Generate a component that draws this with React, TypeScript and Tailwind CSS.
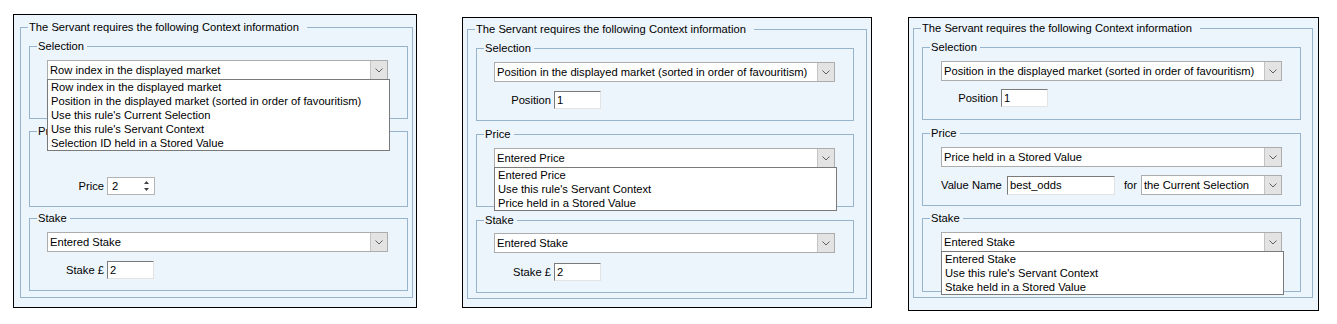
import type { ReactNode } from "react";

const line = "border-[#98b4cc]";

function Chevron() {
  return (
    <svg width="8" height="5" viewBox="0 0 8 5" className="block">
      <path d="M0.5 0.5 L4 4 L7.5 0.5" fill="none" stroke="#606060" strokeWidth="1" />
    </svg>
  );
}

function GroupBox({
  title,
  className,
  outer,
  children,
}: {
  title: string;
  className: string;
  outer?: boolean;
  children?: ReactNode;
}) {
  return (
    <fieldset className={`border ${line} ${className}`}>
      <legend className={`ml-[7px] pl-[1px] leading-[14px] ${outer ? "pr-[8px]" : "pr-[3px]"}`}>{title}</legend>
      {children}
    </fieldset>
  );
}

function Combo({
  value,
  className,
  items,
}: {
  value: string;
  className: string;
  items?: string[];
}) {
  return (
    <div className={`relative flex h-[20px] items-center border border-[#acacac] bg-white ${className}`}>
      <span className="flex-1 truncate pl-[2px] leading-[18px]">{value}</span>
      <span className="flex h-[18px] w-[17px] items-center justify-center border-l border-[#c4c4c4] bg-[#e3e3e3]">
        <Chevron />
      </span>
      {items ? (
        <ul className="absolute left-[-1px] top-full z-10 w-[343px] border border-[#7a7a7a] bg-white">
          {items.map((item) => (
            <li key={item} className="h-[14px] pl-[3px] leading-[14px] whitespace-nowrap">
              {item}
            </li>
          ))}
        </ul>
      ) : null}
    </div>
  );
}

function TextBox({ value, className }: { value: string; className: string }) {
  return (
    <div
      className={`border border-t-[#7a7a7a] border-l-[#7a7a7a] border-r-[#e3e3e3] border-b-[#e3e3e3] bg-white pl-[2px] leading-[16px] ${className}`}
    >
      {value}
    </div>
  );
}

function Field({
  label,
  labelWidth,
  children,
  className,
}: {
  label: string;
  labelWidth: string;
  children: ReactNode;
  className: string;
}) {
  return (
    <div className={`flex items-center ${className}`}>
      <span className={`${labelWidth} pr-[3px] text-right whitespace-nowrap`}>{label}</span>
      {children}
    </div>
  );
}

function Spinner() {
  return (
    <div className="flex h-[18px] w-[48px] items-center border border-[#b4b4b4] bg-white">
      <span className="flex-1 pl-[4px] leading-[16px]">2</span>
      <span className="mr-[5px] flex flex-col items-center gap-[4px]">
        <svg width="5" height="3" viewBox="0 0 5 3" className="block">
          <path d="M0 3 L2.5 0 L5 3 Z" fill="#404040" />
        </svg>
        <svg width="5" height="3" viewBox="0 0 5 3" className="block">
          <path d="M0 0 L2.5 3 L5 0 Z" fill="#404040" />
        </svg>
      </span>
    </div>
  );
}

const selectionItems = [
  "Row index in the displayed market",
  "Position in the displayed market (sorted in order of favouritism)",
  "Use this rule's Current Selection",
  "Use this rule's Servant Context",
  "Selection ID held in a Stored Value",
];

const positionText = "Position in the displayed market (sorted in order of favouritism)";
const title = "The Servant requires the following Context information";

export default function App() {
  return (
    <div className="flex h-[324px] w-[1337px] items-start bg-white pl-[13px] font-['Liberation_Sans',Arial,sans-serif] text-[11.2px] text-black">
      {/* first capture: selection list open */}
      <div className="mt-[14px] h-[294px] w-[404px] border border-black bg-[#edf5fc]">
        <GroupBox title={title} outer className="ml-[6px] mt-[5px] h-[278px] w-[393px]">
          <GroupBox title="Selection" className="ml-[8px] mt-[5px] h-[80px] w-[379px]">
            <Combo value="Row index in the displayed market" className="ml-[17px] mt-[7px] w-[341px]" items={selectionItems} />
          </GroupBox>
          <GroupBox title="Price" className="ml-[8px] mt-[5px] h-[83px] w-[379px]">
            <Field label="Price" labelWidth="w-[77px]" className="mt-[39px]">
              <Spinner />
            </Field>
          </GroupBox>
          <GroupBox title="Stake" className="ml-[8px] mt-[4px] h-[80px] w-[379px]">
            <Combo value="Entered Stake" className="ml-[17px] mt-[7px] w-[341px]" />
            <Field label="Stake £" labelWidth="w-[77px]" className="mt-[9px]">
              <TextBox value="2" className="h-[18px] w-[47px]" />
            </Field>
          </GroupBox>
        </GroupBox>
      </div>

      {/* second capture: price list open */}
      <div className="ml-[45px] mt-[17px] h-[291px] w-[410px] border border-black bg-[#edf5fc]">
        <GroupBox title={title} outer className="ml-[4px] mt-[4px] h-[277px] w-[400px]">
          <GroupBox title="Selection" className="ml-[8px] mt-[5px] h-[80px] w-[378px]">
            <Combo value={positionText} className="ml-[17px] mt-[7px] w-[341px]" />
            <Field label="Position" labelWidth="w-[77px]" className="mt-[9px]">
              <TextBox value="1" className="h-[18px] w-[47px]" />
            </Field>
          </GroupBox>
          <GroupBox title="Price" className="ml-[8px] mt-[6px] h-[80px] w-[378px]">
            <Combo
              value="Entered Price"
              className="ml-[17px] mt-[7px] w-[341px]"
              items={["Entered Price", "Use this rule's Servant Context", "Price held in a Stored Value"]}
            />
          </GroupBox>
          <GroupBox title="Stake" className="ml-[8px] mt-[6px] h-[80px] w-[378px]">
            <Combo value="Entered Stake" className="ml-[17px] mt-[6px] w-[341px]" />
            <Field label="Stake £" labelWidth="w-[77px]" className="mt-[10px]">
              <TextBox value="2" className="h-[18px] w-[47px]" />
            </Field>
          </GroupBox>
        </GroupBox>
      </div>

      {/* third capture: stake list open */}
      <div className="ml-[36px] mt-[17px] h-[294px] w-[411px] border border-black bg-[#edf5fc]">
        <GroupBox title={title} outer className="ml-[4px] mt-[3px] h-[277px] w-[400px]">
          <GroupBox title="Selection" className="ml-[8px] mt-[5px] h-[80px] w-[379px]">
            <Combo value={positionText} className="ml-[18px] mt-[7px] w-[341px]" />
            <Field label="Position" labelWidth="w-[78px]" className="mt-[8px]">
              <TextBox value="1" className="h-[18px] w-[47px]" />
            </Field>
          </GroupBox>
          <GroupBox title="Price" className="ml-[8px] mt-[6px] h-[80px] w-[379px]">
            <Combo value="Price held in a Stored Value" className="ml-[18px] mt-[7px] w-[341px]" />
            <div className="ml-[18px] mt-[8px] flex items-center">
              <span className="w-[66px] whitespace-nowrap">Value Name</span>
              <TextBox value="best_odds" className="h-[19px] w-[108px]" />
              <span className="ml-[9px] w-[17px]">for</span>
              <Combo value="the Current Selection" className="h-[19px] w-[141px]" />
            </div>
          </GroupBox>
          <GroupBox title="Stake" className="ml-[8px] mt-[5px] h-[81px] w-[379px]">
            <Combo
              value="Entered Stake"
              className="ml-[18px] mt-[7px] w-[341px]"
              items={["Entered Stake", "Use this rule's Servant Context", "Stake held in a Stored Value"]}
            />
          </GroupBox>
        </GroupBox>
      </div>
    </div>
  );
}
